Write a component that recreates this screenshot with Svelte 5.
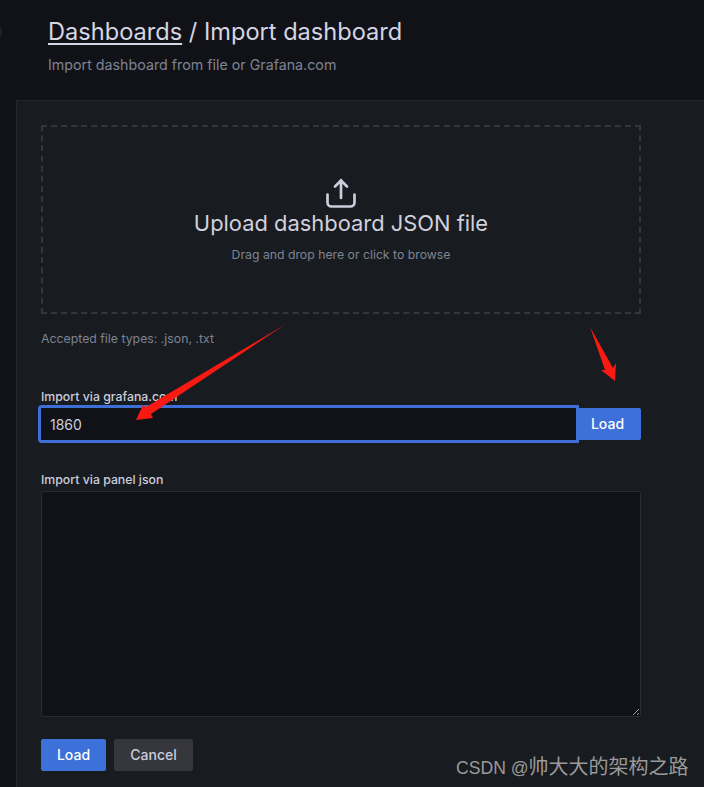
<script>
	let grafanaId = $state('1860');
	let panelJson = $state('');
</script>

<div class="page">
	<span class="nav-dot"></span>

	<header class="header">
		<h1><a href="#dashboards">Dashboards</a> / Import dashboard</h1>
		<p>Import dashboard from file or Grafana.com</p>
	</header>

	<main class="panel">
		<div class="dropzone">
			<svg class="upload" width="32" height="32" viewBox="0 0 32 32" fill="none" stroke="currentColor" stroke-width="2.7" stroke-linecap="round" stroke-linejoin="round">
				<path d="M16 21V3M10 9.500 16 3.500 22 9.500" />
				<path d="M2.500 17.500v8a4 4 0 0 0 4 4h19a4 4 0 0 0 4-4v-8" />
			</svg>
			<div class="drop-title">Upload dashboard JSON file</div>
			<div class="drop-hint">Drag and drop here or click to browse</div>
		</div>
		<div class="accepted">Accepted file types: .json, .txt</div>

		<label class="label first" for="gid">Import via grafana.com</label>
		<div class="input-row">
			<input id="gid" type="text" bind:value={grafanaId} />
			<button class="btn primary addon">Load</button>
		</div>

		<label class="label second" for="json">Import via panel json</label>
		<textarea id="json" bind:value={panelJson}></textarea>

		<div class="actions">
			<button class="btn primary">Load</button>
			<button class="btn secondary">Cancel</button>
		</div>
	</main>

	<!-- annotations drawn over the screenshot -->
	<svg class="arrows" width="704" height="787" viewBox="0 0 704 787">
		<polygon points="286,324 146,407 143,405 136,420 153,418 151,414" />
		<polygon points="590,327 613,368 616,363 615,381 601,370 605,370" />
	</svg>
	<div class="watermark"><span class="latin">CSDN @</span>帅大大的架构之路</div>
</div>

<style>
	:global(body) {
		margin: 0;
		background: #111217;
	}

	.page {
		position: relative;
		width: 704px;
		height: 787px;
		overflow: hidden;
		background: #111217;
		font-family: Inter, "Noto Sans CJK SC", sans-serif;
		color: #ccccdc;
		padding-left: 16px;
		box-sizing: border-box;
	}

	.nav-dot {
		position: absolute;
		left: -10px;
		top: 24px;
		width: 12px;
		height: 16px;
		border-radius: 50%;
		background: #1f2126;
	}

	.header {
		padding: 16px 0 0 32px;
		height: 100px;
		box-sizing: border-box;
	}

	h1 {
		margin: 0;
		font-size: 23.6px;
		font-weight: 400;
		line-height: 32px;
		color: #d5d5e3;
	}

	h1 a {
		color: inherit;
		text-decoration: underline;
		text-underline-offset: 3px;
	}

	.header p {
		margin: 9px 0 0;
		font-size: 14.25px;
		line-height: 16px;
		color: #7e8494;
	}

	.panel {
		height: 687px;
		box-sizing: border-box;
		background: #181b1f;
		border-top: 1px solid #22252b;
		border-left: 1px solid #22252b;
		padding: 24px 0 0 24px;
		display: flex;
		flex-direction: column;
		align-items: flex-start;
	}

	.dropzone {
		width: 600px;
		height: 189px;
		box-sizing: border-box;
		border: 2px dashed #34363c;
		display: flex;
		flex-direction: column;
		align-items: center;
		padding-top: 50px;
	}

	.upload {
		color: #ccccdc;
		margin-bottom: 2px;
	}

	.drop-title {
		font-size: 21.9px;
		line-height: 28px;
		color: #d0d0de;
		margin-top: -2px;
	}

	.drop-hint {
		margin-top: 10px;
		font-size: 12.25px;
		line-height: 16px;
		color: #7e8494;
	}

	.accepted {
		margin-top: 17px;
		font-size: 12.3px;
		line-height: 16px;
		color: #7e8494;
	}

	.label {
		font-size: 12.3px;
		font-weight: 500;
		line-height: 16px;
		color: #ccccdc;
	}

	.label.first {
		margin-top: 42px;
	}

	.label.second {
		margin-top: 29px;
	}

	.input-row {
		display: flex;
		align-items: center;
		width: 603px;
		margin-left: -3px;
	}

	input {
		flex: 1;
		min-width: 0;
		height: 38px;
		margin-right: -1px;
		position: relative;
		z-index: 1;
		box-sizing: border-box;
		background: #111217;
		border: 3px solid #3d6fd6;
		border-radius: 4px 0 0 4px;
		outline: none;
		padding: 0 9px;
		font: 14px/20px Inter, sans-serif;
		color: #ccccdc;
	}

	textarea {
		display: block;
		width: 600px;
		height: 226px;
		box-sizing: border-box;
		margin-top: 3px;
		background: #111217;
		border: 1px solid #2a2c31;
		border-radius: 2px;
		outline: none;
		color: #ccccdc;
	}

	.btn {
		height: 32px;
		border: none;
		border-radius: 2px;
		padding: 0 16px;
		font: 500 14px/32px Inter, sans-serif;
	}

	.primary {
		background: #3d71d9;
		color: #fff;
	}

	.addon {
		width: 63px;
		padding: 0 4px 0 0;
		border-radius: 0 2px 2px 0;
	}

	.secondary {
		background: #35373c;
		color: #ccccdc;
	}

	.actions {
		display: flex;
		gap: 8px;
		margin-top: 22px;
	}

	.actions .primary {
		width: 65px;
		padding: 0;
	}

	.actions .secondary {
		width: 79px;
		padding: 0;
	}

	.arrows {
		position: absolute;
		left: 0;
		top: 0;
		z-index: 2;
		pointer-events: none;
	}

	.arrows polygon {
		fill: #f81a12;
	}

	.watermark {
		position: absolute;
		left: 456px;
		top: 754px;
		z-index: 2;
		font-family: "Noto Sans CJK SC", sans-serif;
		font-size: 20px;
		line-height: 24px;
		color: #9a9a9a;
		white-space: nowrap;
	}

	.latin {
		font-family: "Liberation Sans", sans-serif;
		font-size: 17.6px;
	}
</style>
